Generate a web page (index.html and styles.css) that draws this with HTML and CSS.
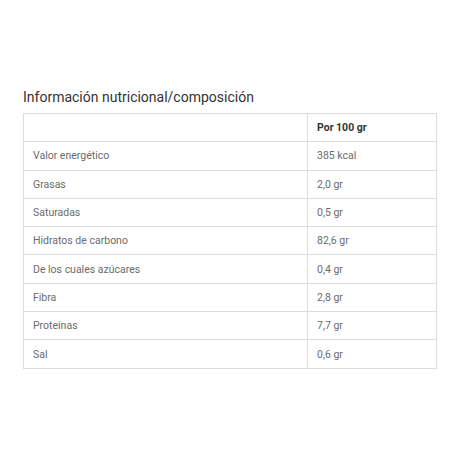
FILE: index.html
```html
<!DOCTYPE html>
<html lang="es">
<head>
<meta charset="utf-8">
<link rel="stylesheet" href="styles.css">
</head>
<body>
<div class="wrap">
  <h2 class="title">Información nutricional/composición</h2>
  <table class="nutri">
    <tr><th></th><th>Por 100 gr</th></tr>
    <tr><td>Valor energético</td><td>385 kcal</td></tr>
    <tr><td>Grasas</td><td>2,0 gr</td></tr>
    <tr><td>Saturadas</td><td>0,5 gr</td></tr>
    <tr><td>Hidratos de carbono</td><td>82,6 gr</td></tr>
    <tr><td>De los cuales azúcares</td><td>0,4 gr</td></tr>
    <tr><td>Fibra</td><td>2,8 gr</td></tr>
    <tr><td>Proteinas</td><td>7,7 gr</td></tr>
    <tr><td>Sal</td><td>0,6 gr</td></tr>
  </table>
</div>
</body>
</html>
```
FILE: styles.css
```css
html, body { margin: 0; padding: 0; background: #fff; }
body { font-family: Roboto, "Noto Sans", sans-serif; }
.wrap { padding: 88px 23px 0 23px; }
.title {
  margin: 0 0 7px 0;
  font-size: 14px;
  font-weight: 400;
  color: #333;
  line-height: 18px;
}
.nutri {
  width: 414px;
  border-collapse: collapse;
  table-layout: fixed;
}
.nutri th, .nutri td {
  border: 1px solid #dcdcdc;
  height: 27.3px;
  padding: 0 0 0 9px;
  text-align: left;
  font-size: 10.5px;
  color: #6b6b6b;
  font-weight: 400;
}
.nutri th:first-child, .nutri td:first-child { width: 274px; }
.nutri th { color: #333; font-weight: 700; }
```
